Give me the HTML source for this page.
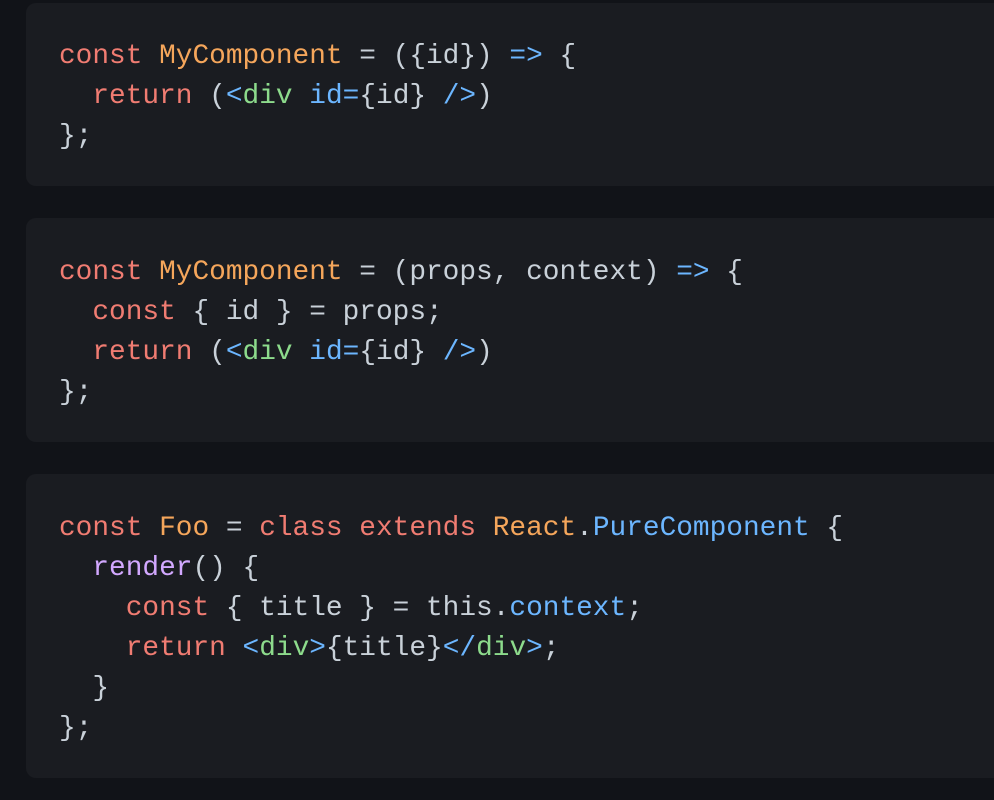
<!DOCTYPE html>
<html><head><style>
html,body{margin:0;background:#111318;width:994px;height:800px;overflow:hidden}
.b{position:absolute;left:26px;width:1000px;background:#1a1c21;border-radius:10px;box-sizing:border-box;padding:35px 0 0 33px}
pre{margin:0;font-family:"Liberation Mono",monospace;font-size:27.8px;line-height:40px;color:#c9d1d9}
.k{color:#f07c72}.o{color:#f5a65b}.c{color:#6cb6ff}.g{color:#8ddb8c}.p{color:#d2a8ff}
</style></head><body>
<div class="b" style="top:3px;height:183px;padding-top:34px"><pre><span class="k">const</span> <span class="o">MyComponent</span> = ({id}) <span class="c">=&gt;</span> {
  <span class="k">return</span> (<span class="c">&lt;</span><span class="g">div</span> <span class="c">id</span><span class="c">=</span>{id} <span class="c">/&gt;</span>)
};</pre></div>
<div class="b" style="top:218px;height:224px"><pre><span class="k">const</span> <span class="o">MyComponent</span> = (props, context) <span class="c">=&gt;</span> {
  <span class="k">const</span> { id } = props;
  <span class="k">return</span> (<span class="c">&lt;</span><span class="g">div</span> <span class="c">id</span><span class="c">=</span>{id} <span class="c">/&gt;</span>)
};</pre></div>
<div class="b" style="top:474px;height:304px"><pre><span class="k">const</span> <span class="o">Foo</span> = <span class="k">class</span> <span class="k">extends</span> <span class="o">React</span>.<span class="c">PureComponent</span> {
  <span class="p">render</span>() {
    <span class="k">const</span> { title } = this.<span class="c">context</span>;
    <span class="k">return</span> <span class="c">&lt;</span><span class="g">div</span><span class="c">&gt;</span>{title}<span class="c">&lt;/</span><span class="g">div</span><span class="c">&gt;</span>;
  }
};</pre></div>
</body></html>
